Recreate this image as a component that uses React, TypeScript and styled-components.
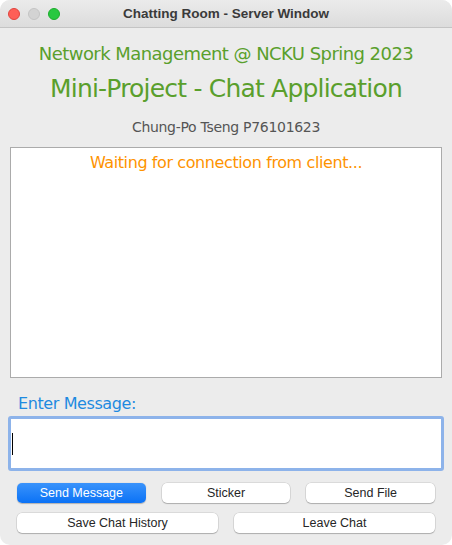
import React from 'react'
import styled, { createGlobalStyle } from 'styled-components'

const GlobalStyle = createGlobalStyle`
  html, body {
    margin: 0;
    padding: 0;
    background: #ffffff;
  }
  * {
    box-sizing: border-box;
  }
`

const Window = styled.div`
  width: 452px;
  height: 545px;
  background: #ececec;
  border-radius: 10px;
  overflow: hidden;
  display: flex;
  flex-direction: column;
  font-family: 'DejaVu Sans', Verdana, sans-serif;
`

const TitleBar = styled.div`
  height: 28px;
  flex: none;
  display: flex;
  align-items: center;
  position: relative;
  background: linear-gradient(#ebebeb, #dcdcdc);
  border-bottom: 1px solid #c4c4c4;
`

const Lights = styled.div`
  display: flex;
  gap: 8px;
  padding-left: 8px;
`

const Light = styled.span<{ $color: string; $border: string }>`
  width: 12px;
  height: 12px;
  border-radius: 50%;
  background: ${(p) => p.$color};
  border: 0.5px solid ${(p) => p.$border};
`

const Title = styled.div`
  position: absolute;
  left: 0;
  right: 0;
  text-align: center;
  font-family: 'Liberation Sans', Arial, sans-serif;
  font-weight: bold;
  font-size: 13.5px;
  color: #3a3a3a;
`

const Body = styled.div`
  flex: 1;
  display: flex;
  flex-direction: column;
  padding: 14px 8px 0;
`

const Heading = styled.div<{ $size: number; $color: string }>`
  text-align: center;
  font-size: ${(p) => p.$size}px;
  color: ${(p) => p.$color};
  white-space: nowrap;
`

const Course = styled(Heading)`
  letter-spacing: -0.55px;
  line-height: 24px;
`

const Project = styled(Heading)`
  letter-spacing: -0.8px;
  line-height: 30px;
  margin-top: 8px;
`

const Author = styled(Heading)`
  letter-spacing: -0.3px;
  line-height: 18px;
  margin-top: 14px;
`

const ChatBox = styled.div`
  margin: 11px 2px 0;
  height: 231px;
  background: #ffffff;
  border: 1px solid #ababab;
  padding-top: 5px;
`

const Status = styled.div`
  text-align: center;
  font-size: 16px;
  letter-spacing: -0.4px;
  color: #fe9300;
  line-height: 20px;
`

const Label = styled.div`
  margin: 16px 0 0 10px;
  font-size: 16px;
  letter-spacing: -0.4px;
  color: #1e8ae0;
  line-height: 20px;
`

const InputField = styled.div`
  margin-top: 2px;
  height: 55px;
  background: #ffffff;
  border: 3px solid #8db3ea;
  border-radius: 3px;
  display: flex;
  align-items: center;
  padding-left: 1px;
`

const Caret = styled.span`
  width: 1px;
  height: 22px;
  background: #000000;
`

const Buttons = styled.div`
  display: flex;
  flex-direction: column;
  gap: 10px;
  margin-top: 12px;
  padding: 0 9px;
`

const Row = styled.div`
  display: flex;
  gap: 16px;
`

const Button = styled.div<{ $primary?: boolean }>`
  flex: 1;
  height: 20px;
  border-radius: 5px;
  display: flex;
  align-items: center;
  justify-content: center;
  font-family: 'Liberation Sans', Arial, sans-serif;
  font-size: 12.5px;
  color: ${(p) => (p.$primary ? '#ffffff' : '#262626')};
  background: ${(p) => (p.$primary ? 'linear-gradient(#3a93fb, #0b72f6)' : '#ffffff')};
  box-shadow: ${(p) =>
    p.$primary
      ? '0 0.5px 1px rgba(0,0,0,0.25)'
      : '0 0 0 0.5px rgba(0,0,0,0.15), 0 1px 1px rgba(0,0,0,0.2)'};
`

const App = () => {
  return (
    <>
      <GlobalStyle />
      <Window>
        <TitleBar>
          <Lights>
            <Light $color="#fe5f57" $border="#e0443e" />
            <Light $color="#d3d3d3" $border="#c4c4c4" />
            <Light $color="#28c840" $border="#1dad2b" />
          </Lights>
          <Title>Chatting Room - Server Window</Title>
        </TitleBar>

        <Body>
          <Course $size={18} $color="#5a9f2c">
            Network Management @ NCKU Spring 2023
          </Course>
          <Project $size={25} $color="#5a9f2c">
            Mini-Project - Chat Application
          </Project>
          <Author $size={14} $color="#555555">
            Chung-Po Tseng P76101623
          </Author>

          <ChatBox>
            <Status>Waiting for connection from client...</Status>
          </ChatBox>

          <Label>Enter Message:</Label>
          <InputField>
            <Caret />
          </InputField>

          <Buttons>
            <Row>
              <Button $primary>Send Message</Button>
              <Button>Sticker</Button>
              <Button>Send File</Button>
            </Row>
            <Row>
              <Button>Save Chat History</Button>
              <Button>Leave Chat</Button>
            </Row>
          </Buttons>
        </Body>
      </Window>
    </>
  )
}

export default App
